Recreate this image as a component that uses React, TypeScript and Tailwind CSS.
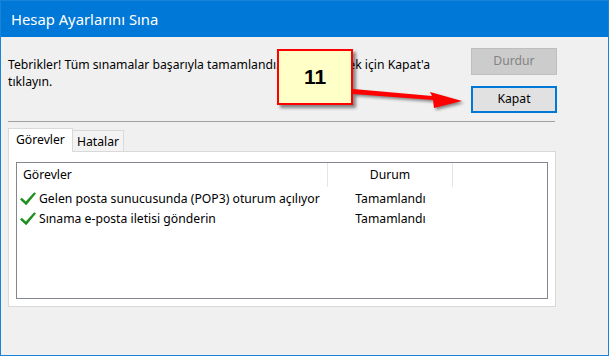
import React from "react";

const FONT = { fontFamily: '"Noto Sans", "Open Sans", sans-serif' };

const ROWS = [
	{ task: "Gelen posta sunucusunda (POP3) oturum açılıyor", status: "Tamamlandı" },
	{ task: "Sınama e-posta iletisi gönderin", status: "Tamamlandı" },
];

function Check() {
	return (
		<svg width="16" height="14" viewBox="0 0 16 14" className="shrink-0">
			<path d="M0 7.6 L1.8 5.8 L5.8 9.4 L14.2 0.2 L16 1.6 L6.2 13.2 Z" fill="#1f8f1f" />
		</svg>
	);
}

export default function App() {
	return (
		<div
			className="relative flex h-[356px] w-[609px] flex-col overflow-hidden border border-[#1883d7] bg-[#f0f0f0] text-black"
			style={FONT}
		>
			{/* Title bar */}
			<div className="flex h-[36px] shrink-0 items-center bg-[#0078d7] pl-[10px] text-[14.8px] text-white">
				Hesap Ayarlarını Sına
			</div>

			<div className="flex flex-col pl-[7px] pr-[51px] pt-[11px]">
				<div className="flex items-start justify-between">
					<p className="mt-[8px] text-[12.2px] leading-[17px]">
						Tebrikler! Tüm sınamalar başarıyla tamamlandı. Devam etmek için Kapat'a
						<br />
						tıklayın.
					</p>
					<div className="flex flex-col gap-[11px]">
						<button
							type="button"
							className="h-[27px] w-[86px] border border-[#bfbfbf] bg-[#cccccc] text-[12.2px] text-[#838383]"
						>
							Durdur
						</button>
						<button
							type="button"
							className="h-[27px] w-[86px] border-2 border-[#0078d7] bg-[#e1e1e1] text-[12.2px]"
						>
							Kapat
						</button>
					</div>
				</div>

				<div className="mr-[2px] mt-[8px] h-px bg-[#a0a0a0]" />

				{/* Tabs */}
				<div className="mr-px mt-[6px] flex flex-col">
					<div className="-mb-px flex items-end text-[12.2px]">
						<div className="relative z-10 flex h-[24px] w-[65px] items-center border border-b-0 border-[#d9d9d9] bg-white pl-[7px]">
							Görevler
						</div>
						<div className="flex h-[22px] w-[51px] items-center border border-l-0 border-b-0 border-[#d9d9d9] bg-[#f3f3f3] pl-[4px] pt-[2px]">
							Hatalar
						</div>
					</div>
					<div className="border border-[#d9d9d9] bg-white px-[7px] pb-[7px] pt-[10px]">
						<div className="h-[137px] border border-[#828790] bg-white text-[12.2px]">
							<div className="flex h-[26px] items-start">
								<div className="flex h-[24px] w-[311px] items-center border-r border-[#e5e5e5] pl-[6px]">
									Görevler
								</div>
								<div className="flex h-[24px] w-[125px] items-center justify-center border-r border-[#e5e5e5]">
									Durum
								</div>
							</div>
							{ROWS.map((row) => (
								<div key={row.task} className="flex h-[20px] items-center">
									<div className="flex w-[311px] items-center gap-[3px] pl-[3px]">
										<Check />
										<span>{row.task}</span>
									</div>
									<div className="w-[125px] text-center">{row.status}</div>
								</div>
							))}
						</div>
					</div>
				</div>
			</div>

			{/* Callout */}
			<div className="absolute left-[276px] top-[48px] flex h-[56px] w-[76px] items-center justify-center border-2 border-[#ff0000] bg-[#ffffc8] shadow-[3px_3px_3px_rgba(0,0,0,0.45)]">
				<span
					className="text-[21px] font-bold"
					style={{ fontFamily: '"Liberation Sans", Arial, sans-serif' }}
				>
					11
				</span>
			</div>
			<svg
				width="116"
				height="28"
				viewBox="0 0 116 28"
				className="absolute left-[349px] top-[84px] drop-shadow-[2px_2px_1.5px_rgba(0,0,0,0.45)]"
			>
				<polygon
					points="3,4 82,11 80,7 112,16 84,23 83,15 3,9"
					fill="#ff0000"
				/>
			</svg>
		</div>
	);
}
